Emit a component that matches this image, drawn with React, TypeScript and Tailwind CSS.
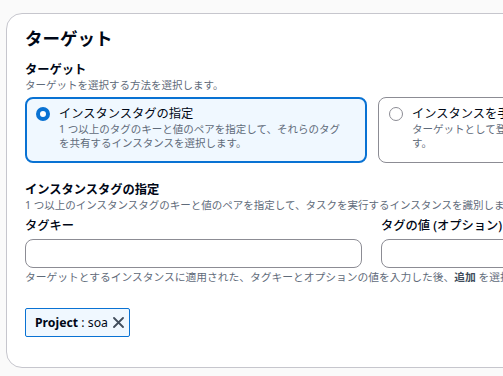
import React from "react";

const font = { fontFamily: '"Noto Sans", "Noto Sans CJK JP", sans-serif' };

function RadioCard({
  selected,
  title,
  lines,
}: {
  selected: boolean;
  title: string;
  lines: string[];
}) {
  return (
    <div
      className={
        selected
          ? "w-[342px] h-[66px] shrink-0 rounded-[8px] border-2 border-[#0972d3] bg-[#f0f8ff] pl-[9px] pt-[7px] flex"
          : "w-[342px] h-[66px] shrink-0 rounded-[8px] border border-[#8c8c94] bg-white pl-[10px] pt-[8px] flex"
      }
    >
      <div className="pt-[1px] shrink-0">
        {selected ? (
          <div className="w-[14px] h-[14px] rounded-full border-[4px] border-[#0972d3] bg-white" />
        ) : (
          <div className="w-[14px] h-[14px] rounded-full border-[1.5px] border-[#8c8c94] bg-white" />
        )}
      </div>
      <div className="ml-[9px]">
        <div className="text-[12.25px] leading-[16px] text-[#000716]">{title}</div>
        {lines.map((l, i) => (
          <div key={i} className="text-[10.5px] leading-[14px] text-[#5f6b7a] whitespace-nowrap">
            {l}
          </div>
        ))}
      </div>
    </div>
  );
}

export default function App() {
  return (
    <div className="w-[503px] h-[376px] overflow-hidden bg-[#fafafa] pt-[13px] pl-[6px]" style={font}>
      <div className="w-[620px] h-[355px] rounded-[16px] border border-[#c6c6cd] bg-white pl-[18px] pt-[13px]">
        <div className="text-[17.5px] leading-[22px] font-bold text-[#000716]">ターゲット</div>
        <div className="mt-[13px] text-[12.25px] leading-[16px] font-bold text-[#000716]">ターゲット</div>
        <div className="text-[10.5px] leading-[14px] text-[#5f6b7a]">ターゲットを選択する方法を選択します。</div>
        <div className="mt-[5px] flex gap-[11px]">
          <RadioCard
            selected
            title="インスタンスタグの指定"
            lines={["1 つ以上のタグのキーと値のペアを指定して、それらのタグ", "を共有するインスタンスを選択します。"]}
          />
          <RadioCard
            selected={false}
            title="インスタンスを手動で選択"
            lines={["ターゲットとして登録するインスタンスを手動で選択しま", "す。"]}
          />
        </div>
        <div className="mt-[19px] text-[12.25px] leading-[16px] font-bold text-[#000716]">インスタンスタグの指定</div>
        <div className="text-[10.5px] leading-[14px] text-[#5f6b7a] whitespace-nowrap">
          1 つ以上のインスタンスタグのキーと値のペアを指定して、タスクを実行するインスタンスを識別します。
        </div>
        <div className="mt-[6px] flex gap-[19px]">
          <div className="w-[337px] shrink-0">
            <div className="text-[12.25px] leading-[16px] font-medium text-[#000716]">タグキー</div>
            <div className="mt-[5px] h-[29px] rounded-[8px] border border-[#8c8c94] bg-white" />
          </div>
          <div className="w-[337px] shrink-0">
            <div className="text-[12.25px] leading-[16px] font-medium text-[#000716] whitespace-nowrap">
              タグの値 (オプション)
            </div>
            <div className="mt-[5px] h-[29px] rounded-[8px] border border-[#8c8c94] bg-white" />
          </div>
        </div>
        <div className="mt-[2px] text-[10.75px] leading-[14px] text-[#5f6b7a] whitespace-nowrap">
          ターゲットとするインスタンスに適用された、タグキーとオプションの値を入力した後、
          <span className="font-bold text-[#414d5c]">追加</span> を選択します。
        </div>
        <div className="mt-[24px] inline-flex items-center h-[29px] border border-[#0972d3] bg-[#f0f8ff] rounded-[2px] pl-[9px] pr-[5px]">
          <span className="text-[12.25px] leading-[16px] text-[#000716]">
            <span className="font-bold">Project</span> : soa
          </span>
          <svg className="ml-[5px]" width="11" height="11" viewBox="0 0 11 11" fill="none">
            <path d="M1 1L10 10M10 1L1 10" stroke="#414d5c" strokeWidth="1.8" strokeLinecap="round" />
          </svg>
        </div>
      </div>
    </div>
  );
}
